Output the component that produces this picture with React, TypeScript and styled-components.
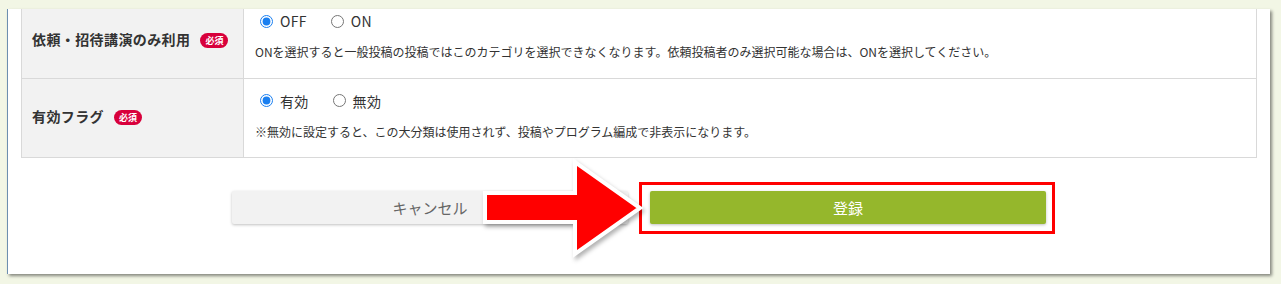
import React from "react";
import styled, { createGlobalStyle } from "styled-components";

const GlobalStyle = createGlobalStyle`
  html, body { margin: 0; padding: 0; }
  body {
    background: #f2f6e5;
    font-family: "Noto Sans CJK JP", "Noto Sans", sans-serif;
    color: #333;
  }
`;

const Page = styled.div`
  width: 1281px;
  height: 284px;
  box-sizing: border-box;
  padding: 9px 11px 0 7px;
`;

const Card = styled.div`
  position: relative;
  background: #fff;
  border-left: 1px solid #6d8fb0;
  box-shadow: 2px 2px 3px rgba(0, 0, 0, 0.45);
  padding: 0 13px 50px 13px;
`;

const Table = styled.table`
  width: 100%;
  border-collapse: collapse;
  border: 1px solid #d9d9d9;
  border-top: none;
`;

const Row = styled.tr`
  border-bottom: 1px solid #d9d9d9;
`;

const LabelCell = styled.th<{ $h: number; $shift?: number }>`
  width: 222px;
  height: ${(p) => p.$h}px;
  box-sizing: border-box;
  background: #f2f2f2;
  border-right: 1px solid #d9d9d9;
  text-align: left;
  padding: 0 0 ${(p) => p.$shift ?? 0}px 10px;
  font-size: 14px;
  letter-spacing: 0.4px;
  font-weight: bold;
  color: #333;
  vertical-align: middle;
  white-space: nowrap;
`;

const Badge = styled.span`
  display: inline-flex;
  align-items: center;
  justify-content: center;
  margin-left: 10px;
  width: 28px;
  height: 15px;
  border-radius: 8px;
  background: #d8003b;
  color: #fff;
  font-size: 9px;
  letter-spacing: 0;
  font-weight: bold;
  vertical-align: 1px;
`;

const ValueCell = styled.td<{ $top: number }>`
  padding: ${(p) => p.$top}px 12px 0 11px;
  vertical-align: top;
`;

const RadioGroup = styled.div`
  display: flex;
  align-items: center;
  gap: 19px;
  height: 20px;
`;

const RadioLabel = styled.label`
  display: inline-flex;
  align-items: center;
  font-size: 14px;
  letter-spacing: 0.3px;
  color: #333;
  input {
    margin: 0 7px 0 5px;
    width: 13px;
    height: 13px;
    accent-color: #1a7ff0;
  }
`;

const Note = styled.p`
  margin: 12px 0 0 0;
  font-size: 12px;
  line-height: 18px;
  color: #333;
  white-space: nowrap;
`;

const Actions = styled.div`
  display: flex;
  justify-content: center;
  gap: 22px;
  padding-top: 33px;
`;

const Button = styled.button<{ $primary?: boolean }>`
  width: 396px;
  height: 33px;
  border: none;
  border-radius: 2px;
  font-family: inherit;
  font-size: 15px;
  color: ${(p) => (p.$primary ? "#fff" : "#666")};
  background: ${(p) => (p.$primary ? "#95b72c" : "#f2f2f2")};
  box-shadow: 0 1px 3px rgba(0, 0, 0, 0.25);
  cursor: pointer;
`;

const Highlight = styled.div`
  position: relative;
  &::after {
    content: "";
    position: absolute;
    top: -9px;
    left: -11px;
    right: -9px;
    bottom: -10px;
    border: 3px solid #ff0000;
    pointer-events: none;
  }
`;

const ArrowSvg = styled.svg`
  position: absolute;
  left: 472px;
  top: 146px;
  overflow: visible;
  filter: drop-shadow(2px 3px 2px rgba(0, 0, 0, 0.3));
`;

function Radio({ name, label, checked }: { name: string; label: string; checked?: boolean }) {
  return (
    <RadioLabel>
      <input type="radio" name={name} defaultChecked={checked} />
      {label}
    </RadioLabel>
  );
}

export default function App() {
  return (
    <>
      <GlobalStyle />
      <Page>
        <Card>
          <Table>
            <tbody>
              <Row>
                <LabelCell $h={69} $shift={8}>
                  依頼・招待講演のみ利用<Badge>必須</Badge>
                </LabelCell>
                <ValueCell $top={2}>
                  <RadioGroup>
                    <Radio name="invite" label="OFF" checked />
                    <Radio name="invite" label="ON" />
                  </RadioGroup>
                  <Note>
                    ONを選択すると一般投稿の投稿ではこのカテゴリを選択できなくなります。依頼投稿者のみ選択可能な場合は、ONを選択してください。
                  </Note>
                </ValueCell>
              </Row>
              <Row>
                <LabelCell $h={79} $shift={3}>
                  有効フラグ<Badge>必須</Badge>
                </LabelCell>
                <ValueCell $top={12}>
                  <RadioGroup>
                    <Radio name="valid" label="有効" checked />
                    <Radio name="valid" label="無効" />
                  </RadioGroup>
                  <Note>
                    ※無効に設定すると、この大分類は使用されず、投稿やプログラム編成で非表示になります。
                  </Note>
                </ValueCell>
              </Row>
            </tbody>
          </Table>
          <Actions>
            <Button type="button">キャンセル</Button>
            <Highlight>
              <Button type="button" $primary>
                登録
              </Button>
            </Highlight>
          </Actions>
          <ArrowSvg width="170" height="115" viewBox="480 155 170 115">
            <polygon
              points="485,193 575,193 575,162 640,208 575,254 575,222 485,222"
              fill="#ff0000"
              stroke="#ffffff"
              strokeWidth="4"
              strokeLinejoin="miter"
            />
          </ArrowSvg>
        </Card>
      </Page>
    </>
  );
}
